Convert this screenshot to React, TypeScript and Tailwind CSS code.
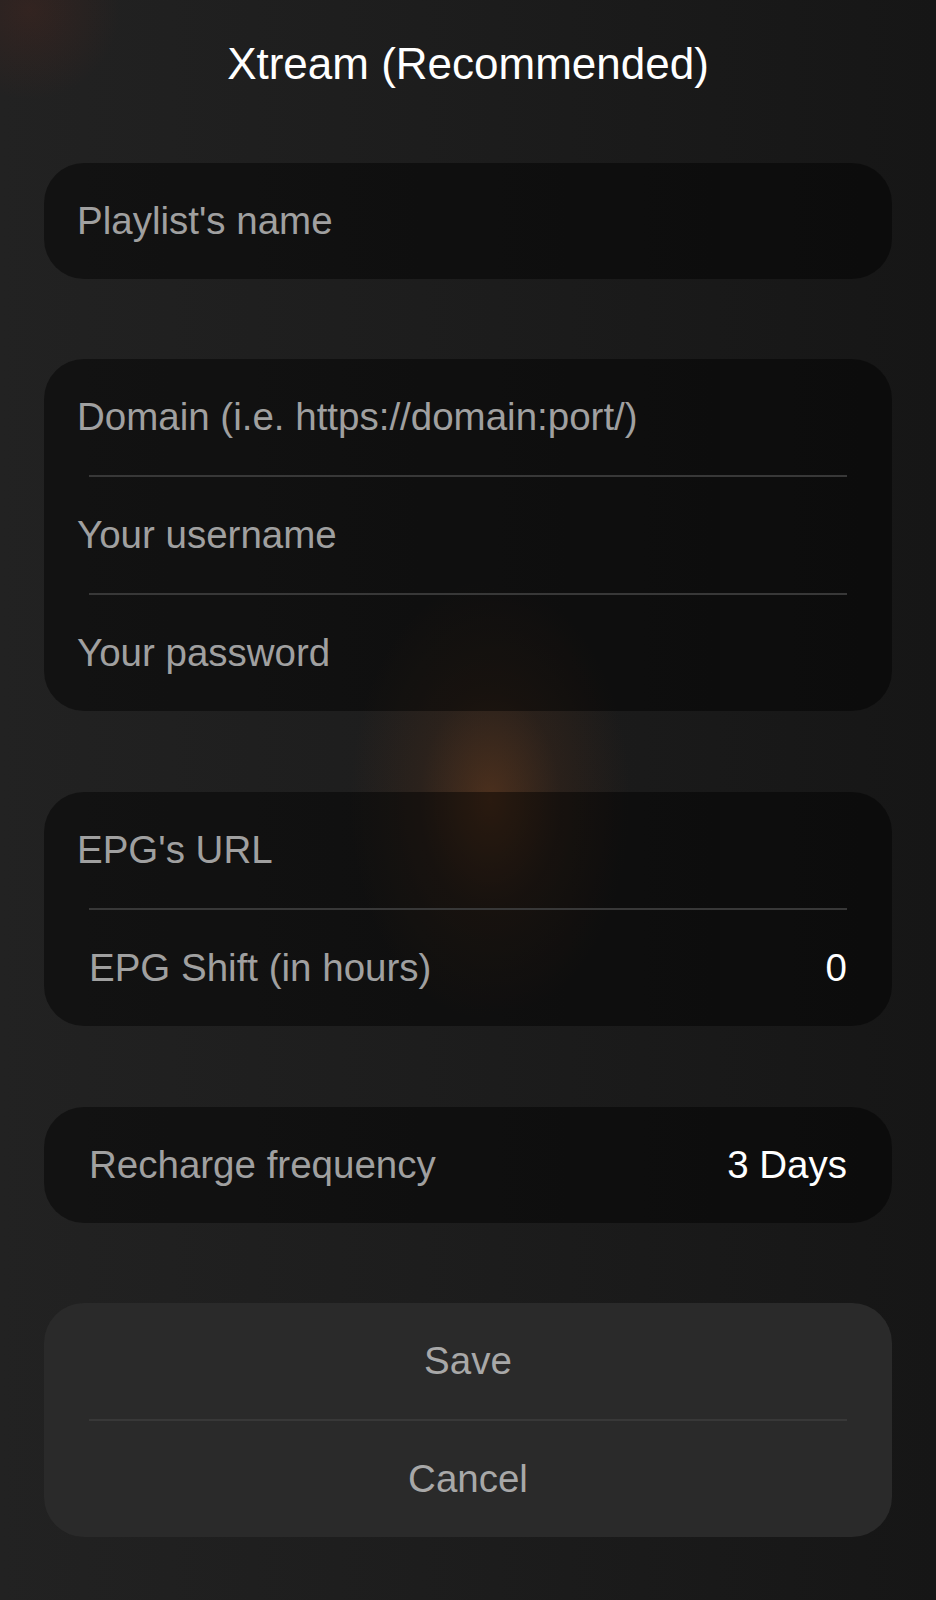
import React from "react";

const font = { fontFamily: '"Liberation Sans", Arial, sans-serif' };

function Field({ label }: { label: string }) {
  return (
    <div className="flex h-[116px] items-center px-[33px]">
      <span className="text-[38.5px] text-[#a0a0a0]">{label}</span>
    </div>
  );
}

function ValueRow({ label, value }: { label: string; value: string }) {
  return (
    <div className="flex h-[116px] items-center justify-between px-[45px]">
      <span className="text-[38.5px] text-[#a0a0a0]">{label}</span>
      <span className="text-[38.5px] text-white">{value}</span>
    </div>
  );
}

function Divider() {
  return <div className="mx-[45px] h-[2px] bg-[#383838]" />;
}

export default function App() {
  return (
    <div
      style={font}
      className="relative min-h-[1600px] w-full overflow-hidden bg-[#1b1b1b]"
    >
      {/* background glows */}
      <div className="pointer-events-none absolute inset-0 bg-[linear-gradient(90deg,#222222_0%,#1d1d1d_45%,#161616_100%)]" />
      <div className="pointer-events-none absolute inset-0 bg-[radial-gradient(ellipse_140px_220px_at_490px_800px,rgba(115,64,30,0.55)_0%,rgba(85,48,25,0.25)_50%,rgba(0,0,0,0)_100%)]" />
      <div className="pointer-events-none absolute inset-0 bg-[radial-gradient(circle_at_30px_10px,rgba(90,40,30,0.3)_0px,rgba(0,0,0,0)_90px)]" />

      <div className="relative flex flex-col px-[44px] pt-[40px]">
        <h1 className="text-center text-[44px] leading-[48px] text-white">
          Xtream (Recommended)
        </h1>

        <div className="mt-[75px] overflow-hidden rounded-[40px] bg-[rgba(0,0,0,0.45)]">
          <Field label="Playlist's name" />
        </div>

        <div className="mt-[80px] overflow-hidden rounded-[40px] bg-[rgba(0,0,0,0.45)]">
          <Field label="Domain (i.e. https://domain:port/)" />
          <Divider />
          <Field label="Your username" />
          <Divider />
          <Field label="Your password" />
        </div>

        <div className="mt-[81px] overflow-hidden rounded-[40px] bg-[rgba(0,0,0,0.45)]">
          <Field label="EPG's URL" />
          <Divider />
          <ValueRow label="EPG Shift (in hours)" value="0" />
        </div>

        <div className="mt-[81px] overflow-hidden rounded-[40px] bg-[rgba(0,0,0,0.45)]">
          <ValueRow label="Recharge frequency" value="3 Days" />
        </div>

        <div className="mt-[80px] overflow-hidden rounded-[40px] bg-[#2a2a2a]">
          <div className="flex h-[116px] items-center justify-center">
            <span className="text-[38.5px] text-[#a8a8a8]">Save</span>
          </div>
          <Divider />
          <div className="flex h-[116px] items-center justify-center">
            <span className="text-[38.5px] text-[#a8a8a8]">Cancel</span>
          </div>
        </div>
      </div>
    </div>
  );
}
